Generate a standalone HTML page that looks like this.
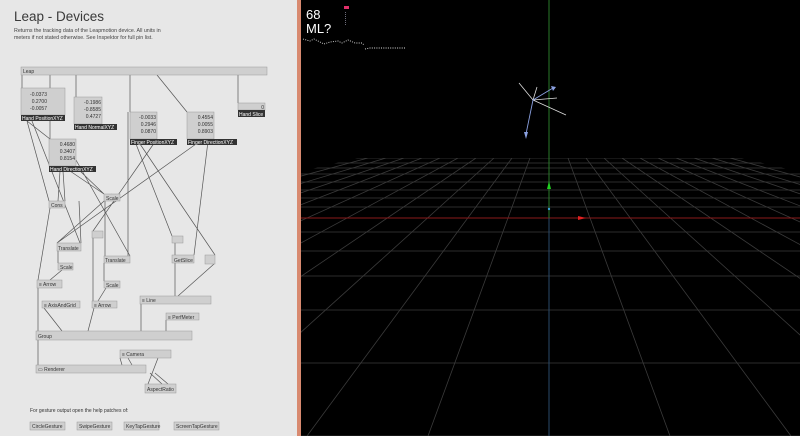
<!DOCTYPE html>
<html><head><meta charset="utf-8"><style>
html,body{margin:0;padding:0;width:800px;height:436px;overflow:hidden;background:#000}
#l{position:absolute;left:0;top:0;width:297px;height:436px;background:#e7e7e7}
#b{position:absolute;left:297px;top:0;width:4px;height:436px;background:#d88a70}
svg{position:absolute;left:0;top:0}
text{font-family:"Liberation Sans",sans-serif}
</style></head><body>
<div id="l"></div><div id="b"></div>
<svg width="297" height="436" viewBox="0 0 297 436">
<text x="14" y="21" font-size="13.5" fill="#3a3a3a">Leap - Devices</text>
<text x="14" y="32" font-size="5.3" fill="#444">Returns the tracking data of the Leapmotion device. All units in</text>
<text x="14" y="39" font-size="5.3" fill="#444">meters if not stated otherwise. See Inspektor for full pin list.</text>
<g stroke="#555" stroke-width="0.7" fill="none">
<path d="M22 75V88M50 75V139M76 75V97M130 75V112M157 75L187 112M238 75V103"/>
<path d="M27 121L50 139M27 121L49 201M32 121L80 243M60 171L58 201M63 171L65 201M70 171L104 194M76 160L130 256M80 171L104 194"/>
<path d="M136 144L172 236M140 144L215 255M157 139L93 231M196 144L57 243M211 117L194 255M112 194L57 243"/>
<path d="M50 208L38 280M79 201L81 243M105 201V256M128 112V256M58 251V263M62 270L50 280M93 238V301M104 263V281M106 288L98 301M175 243V255M175 263V296M214 264L178 296"/>
<path d="M38 288V331M44 308L62 331M94 308L88 331M141 304V331M166 320V331M38 340V365M120 358L122 365M128 358L132 365M158 358L148 384M150 373L162 384M155 373L168 384"/>
</g>
<g fill="#cfcfcf" stroke="#999" stroke-width="0.5">
<rect x="21" y="67" width="246" height="8"/>
<rect x="21" y="88" width="44" height="27"/>
<rect x="74" y="97" width="28" height="27"/>
<rect x="49" y="139" width="27" height="27"/>
<rect x="130" y="112" width="27" height="27"/>
<rect x="187" y="112" width="27" height="27"/>
<rect x="238" y="103" width="27" height="7"/>
<rect x="49" y="201" width="16" height="7"/>
<rect x="104" y="194" width="16" height="7"/>
<rect x="92" y="231" width="11" height="7"/>
<rect x="57" y="243" width="24" height="8"/>
<rect x="104" y="256" width="26" height="7"/>
<rect x="58" y="263" width="15" height="7"/>
<rect x="104" y="281" width="16" height="7"/>
<rect x="37" y="280" width="25" height="8"/>
<rect x="42" y="301" width="38" height="7"/>
<rect x="92" y="301" width="25" height="7"/>
<rect x="172" y="236" width="11" height="7"/>
<rect x="172" y="255" width="22" height="8"/>
<rect x="205" y="255" width="10" height="9"/>
<rect x="140" y="296" width="71" height="8"/>
<rect x="166" y="313" width="33" height="7"/>
<rect x="36" y="331" width="156" height="9"/>
<rect x="120" y="350" width="51" height="8"/>
<rect x="36" y="365" width="110" height="8"/>
<rect x="145" y="384" width="31" height="9"/>
<rect x="30" y="422" width="35" height="8"/>
<rect x="77" y="422" width="35" height="8"/>
<rect x="124" y="422" width="35" height="8"/>
<rect x="174" y="422" width="45" height="8"/>
</g>
<g fill="#333">
<rect x="21" y="115" width="44" height="6"/>
<rect x="74" y="124" width="43" height="6"/>
<rect x="49" y="166" width="47" height="6"/>
<rect x="130" y="139" width="47" height="6"/>
<rect x="187" y="139" width="50" height="6"/>
<rect x="238" y="110" width="27" height="7"/>
</g>
<g font-size="5" fill="#fff">
<text x="22" y="120">Hand PositionXYZ</text>
<text x="75" y="129">Hand NormalXYZ</text>
<text x="50" y="171">Hand DirectionXYZ</text>
<text x="131" y="144">Finger PositionXYZ</text>
<text x="188" y="144">Finger DirectionXYZ</text>
<text x="239" y="116">Hand Slice</text>
</g>
<g font-size="5" fill="#333" text-anchor="end">
<text x="47" y="96">-0.0373</text><text x="47" y="103">0.2700</text><text x="47" y="110">-0.0057</text>
<text x="101" y="104">-0.1986</text><text x="101" y="111">-0.8585</text><text x="101" y="118">0.4727</text>
<text x="75" y="146">0.4680</text><text x="75" y="153">0.3407</text><text x="75" y="160">0.8154</text>
<text x="156" y="119">-0.0033</text><text x="156" y="126">0.2946</text><text x="156" y="133">0.0870</text>
<text x="213" y="119">0.4554</text><text x="213" y="126">0.0055</text><text x="213" y="133">0.8903</text>
<text x="264" y="109">0</text>
</g>
<g font-size="5" fill="#333">
<text x="23" y="73">Leap</text>
<text x="51" y="207">Cons</text><text x="106" y="200">Scale</text>
<text x="58" y="250">Translate</text><text x="105" y="262">Translate</text>
<text x="60" y="269">Scale</text><text x="106" y="287">Scale</text>
<text x="39" y="286">≡ Arrow</text><text x="44" y="307">≡ AxisAndGrid</text>
<text x="94" y="307">≡ Arrow</text><text x="174" y="262">GetSlice</text>
<text x="142" y="302">≡ Line</text><text x="168" y="319">≡ PerfMeter</text>
<text x="38" y="338">Group</text><text x="122" y="356">≡ Camera</text>
<text x="38" y="371">▭ Renderer</text><text x="147" y="391">AspectRatio</text>
<text x="30" y="412">For gesture output open the help patches of:</text>
<text x="32" y="428">CircleGesture</text><text x="79" y="428">SwipeGesture</text>
<text x="126" y="428">KeyTapGesture</text><text x="176" y="428">ScreenTapGesture</text>
</g>
</svg>
<svg width="800" height="436" viewBox="0 0 800 436" style="left:0">
<defs><clipPath id="c"><polygon points="357,158 742,158 800,172 800,436 301,436 301,171.5"/></clipPath></defs>
<g clip-path="url(#c)" stroke="#3a3a3a" stroke-width="0.8">
<path d="M301 158H800M301 163H800M301 168H800M301 174H800M301 182H800M301 190H800M301 198H800M301 207H800M301 232H800M301 251H800M301 276H800M301 310H800M301 363H800M301 436H800"/>
<path d="M549 158L549 436M530 158L428 436M512 158L307 436M494 158L186 436M476 158L65 436M458 158L-56 436M440 158L-177 436M422 158L-298 436M404 158L-419 436M386 158L-540 436M368 158L-661 436M568 158L670 436M586 158L791 436M604 158L912 436M622 158L1033 436M640 158L1154 436M658 158L1275 436M676 158L1396 436M694 158L1517 436M712 158L1638 436M730 158L1759 436"/>
</g>
<path d="M301 218H800" stroke="#8a1a1a" stroke-width="1"/>
<path d="M549 0V218" stroke="#2a7a2a" stroke-width="1"/>
<path d="M549 218V436" stroke="#2a4a6a" stroke-width="1"/>
<path d="M578 216L586 218L578 220Z" fill="#e02020"/>
<path d="M547 189L549 181L551 189Z" fill="#20d020"/>
<circle cx="549" cy="209" r="1.2" fill="#3aa0d0"/>
<g stroke="#ddd" stroke-width="0.8" fill="none">
<path d="M533 100L519 83M533 100L537 87M533 100L557 98M533 100L566 115"/>
</g>
<path d="M533 100L553 88M533 100L526 134" stroke="#8aa0e0" stroke-width="0.9"/>
<path d="M524 132L526 139L528 132Z M551 86L556 87L553 91Z" fill="#8aa0e0"/>
<text x="306" y="19" font-family="'DejaVu Sans Mono',monospace" font-size="13" fill="#fff">68</text>
<text x="306" y="33" font-family="'DejaVu Sans Mono',monospace" font-size="13" fill="#fff">ML?</text>
<rect x="344" y="6" width="5" height="3" fill="#e0306a"/>
<path d="M345.5 12V26" stroke="#889" stroke-width="0.8" stroke-dasharray="1 1"/>
<path d="M303 39L310 41L314 39L320 42L324 44L330 42L338 41L342 43L348 40L355 43L362 43L364 45M365 49L370 48L406 48" stroke="#ddd" stroke-width="0.9" stroke-dasharray="1 1.3" fill="none"/>
</svg>
</body></html>
